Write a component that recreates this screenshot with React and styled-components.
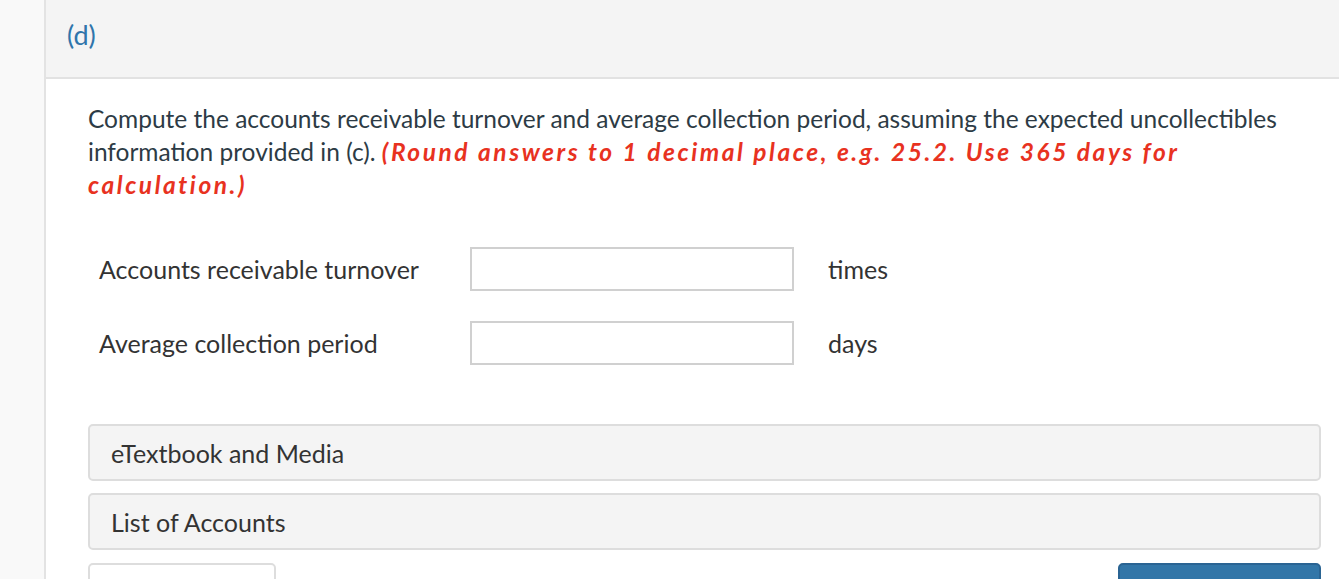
import React from "react";
import styled, { createGlobalStyle } from "styled-components";

const GlobalStyle = createGlobalStyle`
  html, body {
    margin: 0;
    padding: 0;
    background: #ffffff;
    overflow: hidden;
  }
  body {
    font-family: Lato, "Open Sans", "Liberation Sans", sans-serif;
  }
`;

const rows = [
  { label: "Accounts receivable turnover", unit: "times" },
  { label: "Average collection period", unit: "days" },
];

const panels = ["eTextbook and Media", "List of Accounts"];

function App() {
  return (
    <Page>
      <GlobalStyle />
      <SideStrip />
      <Main>
        <PartHeader>
          <PartLabel>(d)</PartLabel>
        </PartHeader>
        <Body>
          <Question>
            Compute the accounts receivable turnover and average collection
            period, assuming the expected uncollectibles information provided
            in (c).{" "}
            <Hint>
              (Round answers to 1 decimal place, e.g. 25.2. Use 365 days for
              calculation.)
            </Hint>
          </Question>

          <Answers>
            {rows.map((row) => (
              <AnswerRow key={row.label}>
                <Label>{row.label}</Label>
                <AnswerInput type="text" />
                <Unit>{row.unit}</Unit>
              </AnswerRow>
            ))}
          </Answers>

          <Panels>
            {panels.map((p) => (
              <Panel key={p}>{p}</Panel>
            ))}
          </Panels>

          <ButtonBar>
            <SecondaryButton />
            <PrimaryButton />
          </ButtonBar>
        </Body>
      </Main>
    </Page>
  );
}

export default App;

const Page = styled.div`
  display: flex;
  width: 1339px;
  min-height: 579px;
`;

const SideStrip = styled.div`
  width: 44px;
  flex-shrink: 0;
  background: #f9f9f9;
  border-right: 2px solid #e3e3e3;
`;

const Main = styled.div`
  flex: 1;
  display: flex;
  flex-direction: column;
`;

const PartHeader = styled.div`
  height: 77px;
  background: #f4f4f4;
  border-bottom: 2px solid #e2e2e2;
  padding-left: 21px;
  display: flex;
  align-items: flex-start;
`;

const PartLabel = styled.div`
  margin-top: 19px;
  font-size: 27px;
  line-height: 32px;
  color: #2f75ab;
`;

const Body = styled.div`
  padding: 23px 18px 0 42px;
`;

const Question = styled.p`
  margin: 0;
  font-size: 24.5px;
  line-height: 33px;
  color: #2d3b45;
`;

const Hint = styled.span`
  color: #e8321f;
  font-weight: 700;
  font-style: italic;
  letter-spacing: 2.55px;
`;

const Answers = styled.div`
  margin-top: 46px;
  display: flex;
  flex-direction: column;
  gap: 30px;
`;

const AnswerRow = styled.div`
  display: flex;
  align-items: center;
  padding-left: 11px;
`;

const Label = styled.div`
  width: 371px;
  font-size: 25px;
  color: #333333;
`;

const AnswerInput = styled.input`
  box-sizing: border-box;
  width: 324px;
  height: 44px;
  margin: 0;
  border: 2px solid #d0d0d0;
  background: #ffffff;
  outline: none;
`;

const Unit = styled.div`
  margin-left: 34px;
  font-size: 25px;
  color: #333333;
`;

const Panels = styled.div`
  margin-top: 59px;
  display: flex;
  flex-direction: column;
  gap: 12px;
`;

const Panel = styled.div`
  box-sizing: border-box;
  height: 57px;
  display: flex;
  align-items: center;
  padding-left: 21px;
  background: #f4f4f4;
  border: 2px solid #dddddd;
  border-radius: 5px;
  font-size: 25px;
  color: #333333;
`;

const ButtonBar = styled.div`
  margin-top: 13px;
  display: flex;
  justify-content: space-between;
`;

const SecondaryButton = styled.div`
  box-sizing: border-box;
  width: 188px;
  height: 44px;
  background: #ffffff;
  border: 2px solid #dddddd;
  border-radius: 5px;
`;

const PrimaryButton = styled.div`
  box-sizing: border-box;
  width: 203px;
  height: 44px;
  background: #3276a8;
  border: 2px solid #2a6493;
  border-radius: 5px;
`;
